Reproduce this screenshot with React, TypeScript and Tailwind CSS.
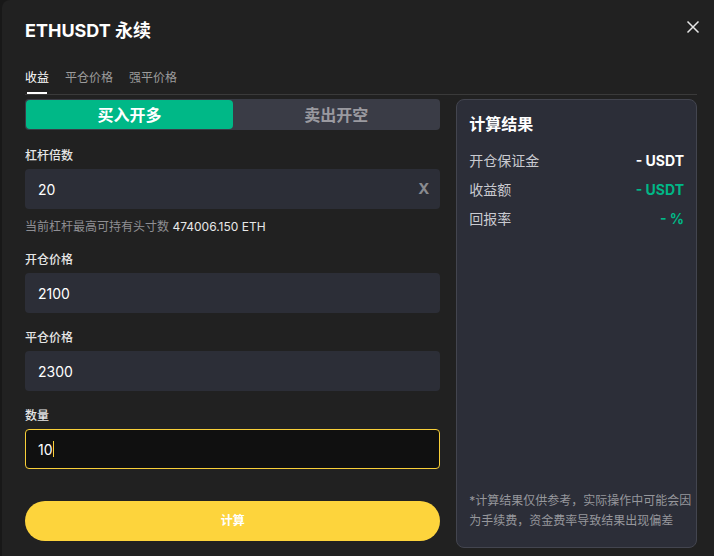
import React from "react";

const font = { fontFamily: '"Inter", "Noto Sans CJK SC", sans-serif' };

function Field({ label, value, clear }: { label: string; value: string; clear?: boolean }) {
  return (
    <div className="flex flex-col">
      <p className="text-[12px] text-[#e6e6e6] font-medium leading-[16px] mb-[5px]">{label}</p>
      <div className="h-[40px] bg-[#2c2e37] rounded-[4px] flex items-center justify-between px-[13px]">
        <span className="text-[14px] text-white">{value}</span>
        {clear && <span className="text-[15px] font-bold text-[#8a8b90] mr-[-2px]">X</span>}
      </div>
    </div>
  );
}

export default function App() {
  return (
    <div className="w-[714px] h-[556px] bg-[#181818] overflow-hidden" style={font}>
      <div className="ml-[2px] h-full bg-[#212121] rounded-tl-[8px] pl-[23px] pr-[17px] relative">
        <div className="h-[58px] flex items-center pt-[2px]">
          <h1 className="text-[18px] font-bold text-white">ETHUSDT 永续</h1>
        </div>
        <svg className="absolute right-[14px] top-[20px]" width="14" height="14" viewBox="0 0 14 14">
          <path d="M1.5 1.5 L12.5 12.5 M12.5 1.5 L1.5 12.5" stroke="#e6e6e6" strokeWidth="1.5" />
        </svg>

        <div className="flex items-end gap-[16px] text-[12px] border-b border-[#3a3a3a] h-[37px]">
          <div className="flex flex-col items-start">
            <span className="text-white leading-[16px] pb-[6px]">收益</span>
            <div className="h-[2px] w-[20px] bg-white ml-[2px]" />
          </div>
          <span className="text-[#9c9c9c] leading-[16px] pb-[8px]">平仓价格</span>
          <span className="text-[#9c9c9c] leading-[16px] pb-[8px]">强平价格</span>
        </div>

        <div className="flex gap-[16px] mt-[4px]">
          <div className="w-[416px] flex flex-col">
            <div className="h-[31px] bg-[#3a3c46] rounded-[4px] flex p-[1px]">
              <div className="w-[207px] bg-[#00b887] rounded-[4px] flex items-center justify-center text-[16px] font-bold text-white">
                买入开多
              </div>
              <div className="flex-1 flex items-center justify-center text-[16px] font-bold text-[#9a9aa0]">
                卖出开空
              </div>
            </div>

            <div className="mt-[18px]">
              <Field label="杠杆倍数" value="20" clear />
            </div>
            <p className="text-[12px] text-[#8f8f93] mt-[10px] leading-[16px]">
              当前杠杆最高可持有头寸数 <span className="text-[#e8e8e8]">474006.150 ETH</span>
            </p>

            <div className="mt-[17px]">
              <Field label="开仓价格" value="2100" />
            </div>
            <div className="mt-[17px]">
              <Field label="平仓价格" value="2300" />
            </div>

            <div className="mt-[17px] flex flex-col">
              <p className="text-[12px] text-[#e6e6e6] font-medium leading-[16px] mb-[5px]">数量</p>
              <div className="h-[40px] bg-[#101010] border border-[#f8cf39] rounded-[4px] flex items-center px-[12px]">
                <span className="text-[14px] text-white">10</span>
                <span className="w-[1px] h-[16px] bg-[#f8cf39]" />
              </div>
            </div>

            <button className="mt-[32px] h-[40px] rounded-full bg-[#fdd43c] text-white text-[12px] font-bold">
              计算
            </button>
          </div>

          <div className="w-[241px] h-[449px] bg-[#2c2e38] border border-[#43454f] rounded-[8px] pl-[12px] pr-[12px] pt-[13px] pb-[16px] flex flex-col">
            <h2 className="text-[16px] font-bold text-white leading-[22px]">计算结果</h2>
            <div className="mt-[16px] flex flex-col gap-[9px] text-[14px]">
              <div className="flex justify-between leading-[20px]">
                <span className="text-[#c9cad0]">开仓保证金</span>
                <span className="font-bold text-white">- USDT</span>
              </div>
              <div className="flex justify-between leading-[20px]">
                <span className="text-[#c9cad0]">收益额</span>
                <span className="font-bold text-[#00b887]">- USDT</span>
              </div>
              <div className="flex justify-between leading-[20px]">
                <span className="text-[#c9cad0]">回报率</span>
                <span className="font-bold text-[#00b887]">- %</span>
              </div>
            </div>
            <p className="mt-auto -mr-[8px] text-[12px] text-[#96979c] leading-[20px]">
              *计算结果仅供参考，实际操作中可能会因为手续费，资金费率导致结果出现偏差
            </p>
          </div>
        </div>
      </div>
    </div>
  );
}
